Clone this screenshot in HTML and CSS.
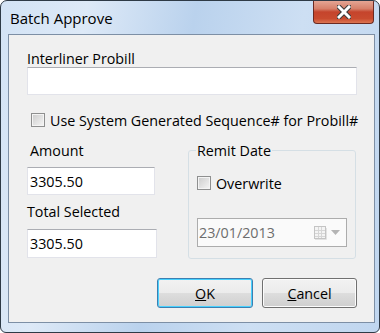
FILE: index.html
```html
<!DOCTYPE html>
<html lang="en">
<head>
  <meta charset="UTF-8" />
  <title>Batch Approve</title>
  <link rel="stylesheet" href="styles.css">
</head>
<body>

  <div class="window">

    <div class="titlebar">
      <span class="title">Batch Approve</span>
      <div class="close-btn">
        <svg width="14" height="14" viewBox="0 0 14 14">
          <path d="M2 2 L12 12 M12 2 L2 12" stroke="#3a3a3a" stroke-width="5" stroke-linecap="square" />
          <path d="M2 2 L12 12 M12 2 L2 12" stroke="#ffffff" stroke-width="3" stroke-linecap="square" />
        </svg>
      </div>
    </div>

    <div class="client">
      <label class="field-label">Interliner Probill</label>
      <input type="text" class="textbox wide">

      <div class="check-row system-seq">
        <span class="checkbox"></span>
        <span>Use System Generated Sequence# for Probill#</span>
      </div>

      <div class="lower">
        <div class="left-col">
          <label class="field-label amount-label">Amount</label>
          <input type="text" class="textbox amount" value="3305.50">
          <label class="field-label total-label">Total Selected</label>
          <input type="text" class="textbox total" value="3305.50">
        </div>

        <fieldset class="group">
          <legend>Remit Date</legend>
          <div class="check-row overwrite">
            <span class="checkbox"></span>
            <span>Overwrite</span>
          </div>
          <div class="datepicker">
            <span class="date-text">23/01/2013</span>
            <svg class="cal-icon" width="13" height="14" viewBox="0 0 13 14">
              <rect x="0.5" y="0.5" width="11" height="12" fill="#f4f4f4" stroke="#c4c4c4" />
              <path d="M1 4.5 H11 M1 7.5 H11 M1 10.5 H11 M4.5 1 V12 M7.5 1 V12" stroke="#d6d6d6" />
              <path d="M12.5 2 V13.5 H1" stroke="#e2e2e2" fill="none" />
            </svg>
            <svg class="drop-arrow" width="9" height="5" viewBox="0 0 9 5">
              <path d="M0 0 H9 L4.5 5 Z" fill="#b4b4b4" />
            </svg>
          </div>
        </fieldset>
      </div>

      <div class="buttons">
        <button class="btn default"><u>O</u>K</button>
        <button class="btn"><u>C</u>ancel</button>
      </div>
    </div>

  </div>

</body>
</html>
```

FILE: styles.css
```css
body {
  margin: 0;
  font-family: 'Open Sans', 'Noto Sans', sans-serif;
  font-size: 14.3px;
  color: #000;
  background: #ffffff;
}

.window {
  width: 380px;
  height: 333px;
  box-sizing: border-box;
  border: 1px solid #2e3a46;
  border-radius: 7px 7px 6px 6px;
  background: linear-gradient(100deg, #d3e3f5 0%, #dde9f7 20%, #bad2ed 45%, #cddff3 70%, #c0d6ef 100%);
  display: flex;
  flex-direction: column;
  overflow: hidden;
}

.titlebar {
  height: 33px;
  display: flex;
  align-items: flex-start;
}

.title {
  margin-left: 9px;
  margin-top: 7px;
  font-size: 15px;
  line-height: 20px;
}

.close-btn {
  margin-left: auto;
  margin-right: 5px;
  width: 59px;
  height: 22px;
  border: 1px solid #6b2a22;
  border-top: 0;
  border-radius: 0 0 4px 4px;
  background: linear-gradient(#e4a594 0%, #d6806a 35%, #c5442c 50%, #c94b2f 80%, #dc7552 100%);
  display: flex;
  justify-content: center;
  align-items: center;
}

.client {
  height: 289px;
  box-sizing: border-box;
  margin: 0 4px 0 7px;
  border: 1px solid #7d8fa5;
  background-color: #f0f0f0;
  padding: 15px 17px 0 18px;
}

.field-label {
  display: block;
  line-height: 17px;
  white-space: nowrap;
}

.textbox {
  display: block;
  box-sizing: border-box;
  margin: 0;
  padding: 0 2px;
  font-family: inherit;
  font-size: 14.3px;
  color: #000;
  background: #fff;
  border: 1px solid #e2e3ea;
  border-top-color: #abadb3;
  outline: none;
}

.wide {
  width: 330px;
  height: 28px;
}

.check-row {
  display: flex;
  align-items: center;
  height: 20px;
  white-space: nowrap;
}

.system-seq {
  margin-top: 15px;
  padding-left: 4px;
}

.checkbox {
  width: 14px;
  height: 14px;
  box-sizing: border-box;
  border: 1px solid #8e8f8f;
  background: linear-gradient(135deg, #cbcbcb, #f6f6f6);
  box-shadow: inset 0 0 0 1px #f4f4f4;
  margin-right: 5px;
  flex: none;
}

.lower {
  display: flex;
  margin-top: 12px;
}

.left-col {
  width: 131px;
}

.amount-label {
  padding-left: 3px;
}

.amount {
  width: 128px;
  height: 28px;
  margin-top: 8px;
}

.total-label {
  margin-top: 8px;
}

.total {
  width: 130px;
  height: 29px;
  margin-top: 9px;
}

.group {
  margin: 0 0 0 30px;
  width: 168px;
  box-sizing: border-box;
  height: 117px;
  padding: 0 8px 0 8px;
  border: 1px solid #d5dfe5;
  border-radius: 3px;
}

.group legend {
  padding: 0 1px;
  margin-left: -1px;
  line-height: 17px;
}

.overwrite {
  margin-top: 14px;
}

.datepicker {
  margin-top: 25px;
  width: 150px;
  height: 29px;
  box-sizing: border-box;
  border: 1px solid #acacac;
  background: #fafafa;
  display: flex;
  align-items: center;
  padding-left: 1px;
}

.date-text {
  color: #6d6d6d;
}

.cal-icon {
  margin-left: auto;
}

.drop-arrow {
  margin: 0 6px 0 4px;
}

.buttons {
  display: flex;
  justify-content: flex-end;
  gap: 9px;
  margin-top: 19px;
}

.btn {
  width: 95px;
  height: 30px;
  font-family: inherit;
  font-size: 14.3px;
  color: #000;
  border: 1px solid #707070;
  border-radius: 3px;
  background: linear-gradient(#f2f2f2 0%, #ebebeb 50%, #dddddd 51%, #cfcfcf 100%);
  box-shadow: inset 0 0 0 1px #fcfcfc;
  padding: 0;
}

.btn.default {
  width: 96px;
  border-color: #3c7fb1;
  box-shadow: inset 0 0 0 1px #48d1fe;
}
```
